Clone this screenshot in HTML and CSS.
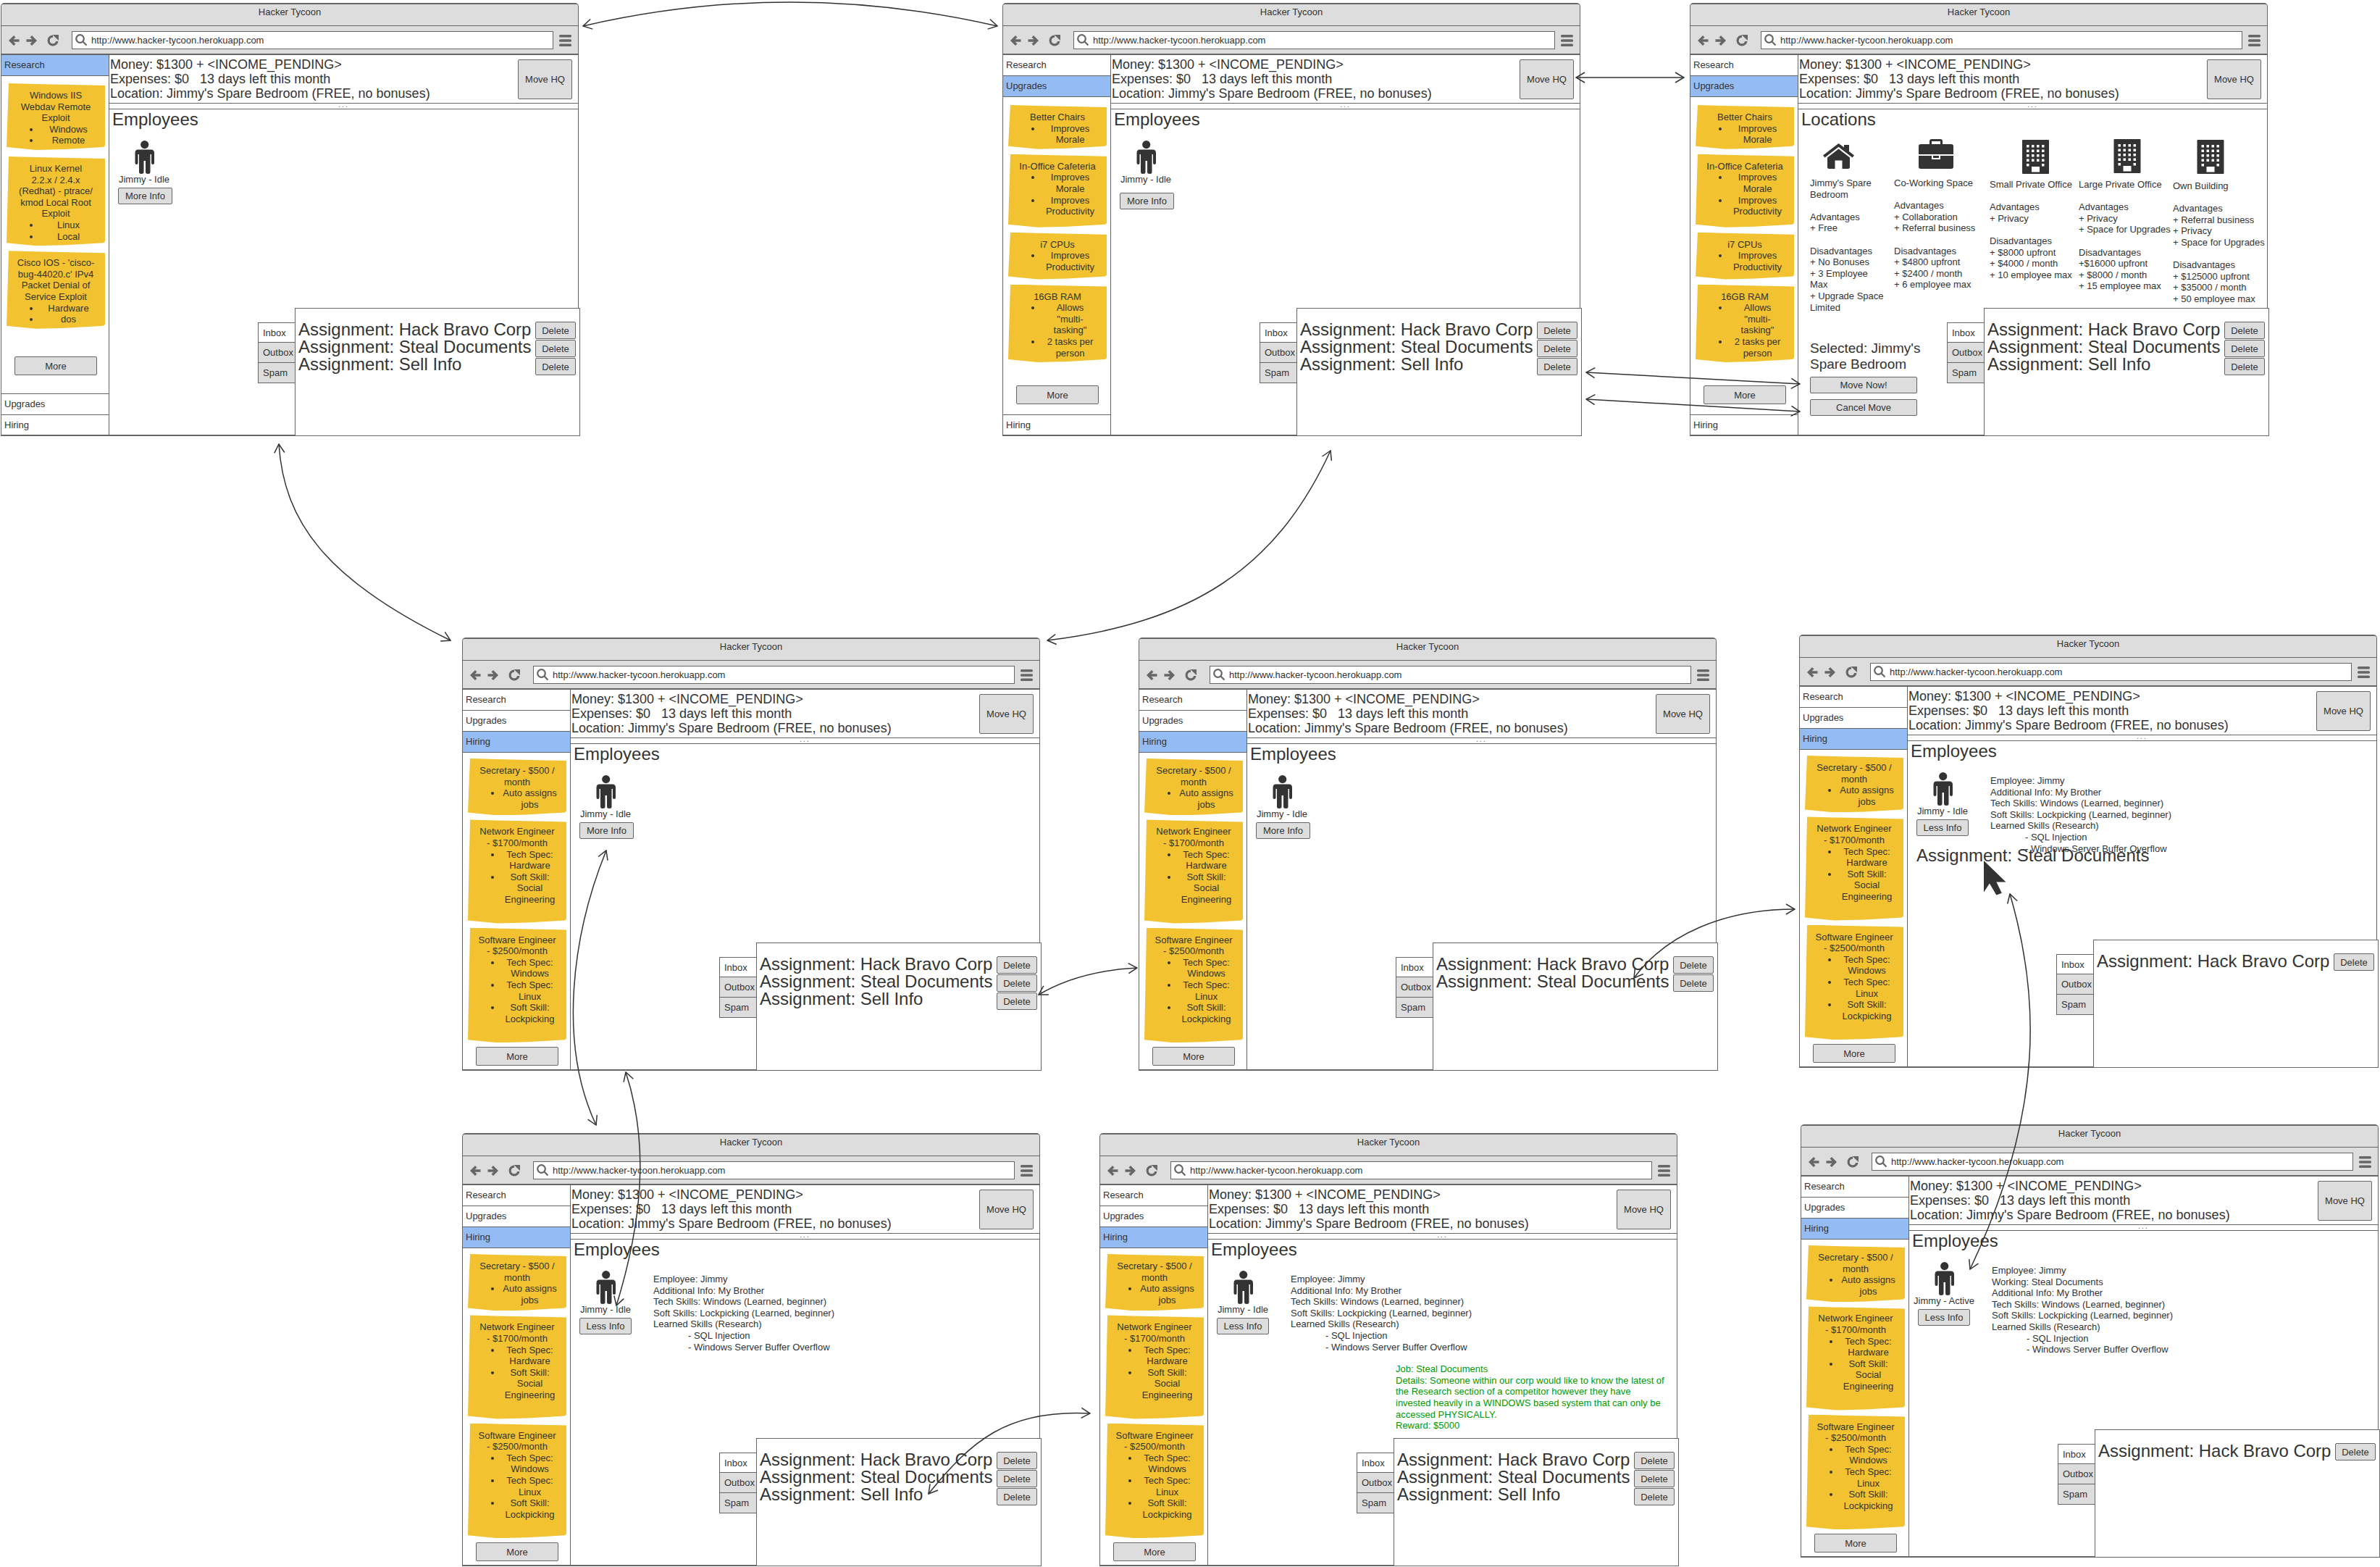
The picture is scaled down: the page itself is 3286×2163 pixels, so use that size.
FILE: index.html
```html
<!DOCTYPE html>
<html lang="en">
<head>
    <meta charset="UTF-8">
    <title>Hacker Tycoon</title>
    <link rel="stylesheet" href="styles.css">
</head>
<body>
<svg class="defs" width="0" height="0">
    <symbol id="back" viewBox="0 0 16 16"><path d="M8 1 L1 8 L8 15 L10.5 12.5 L7.5 9.8 H15.5 V6.2 H7.5 L10.5 3.5 Z"/></symbol>
    <symbol id="forward" viewBox="0 0 16 16"><path d="M8 1 L15 8 L8 15 L5.5 12.5 L8.5 9.8 H0.5 V6.2 H8.5 L5.5 3.5 Z"/></symbol>
    <symbol id="reload" viewBox="0 0 16 16"><path d="M8 0.5 A7.5 7.5 0 1 0 15.5 9 H12 A4.2 4.2 0 1 1 8 3.8 Z"/><path d="M7.5 0 L16 0 L16 8 Z"/></symbol>
    <symbol id="search" viewBox="0 0 17 17"><path class="lens" d="M10.8 10.8 L15.5 15.5 M11.8 6.5 A5.3 5.3 0 1 1 1.2 6.5 A5.3 5.3 0 1 1 11.8 6.5"/></symbol>
    <symbol id="menu" viewBox="0 0 17 16"><rect y="0" width="17" height="3.6" rx="1.5"/><rect y="6.2" width="17" height="3.6" rx="1.5"/><rect y="12.4" width="17" height="3.6" rx="1.5"/></symbol>
    <symbol id="person" viewBox="0 0 27 46"><circle cx="13.7" cy="5.6" r="5.6"/><path d="M4.5 12.5 H22.5 Q27 12.5 27 17 V31 Q27 33 25 33 Q23 33 23 31 V19 H21.5 V43.5 Q21.5 46 18.5 46 Q15 46 15 43.5 V28 H12.5 V43.5 Q12.5 46 9 46 Q6 46 6 43.5 V19 H4.5 V31 Q4.5 33 2.5 33 Q0.5 33 0.5 31 V17 Q0.5 12.5 4.5 12.5 Z"/></symbol>
    <symbol id="house" viewBox="0 0 43 35"><path d="M0 16.5 L21.5 0 L29 5.5 V2 H36 V11 L43 16.5 L40.5 19.5 L21.5 4.8 L2.5 19.5 Z"/><path d="M6 19.5 L21.5 7.5 L37 19.5 V32.5 Q37 35 34.5 35 H26.5 V23.5 H16.5 V35 H8.5 Q6 35 6 32.5 Z"/></symbol>
    <symbol id="briefcase" viewBox="0 0 48 41"><path d="M15 7 V3 Q15 0 18 0 H30 Q33 0 33 3 V7 H30 V3 H18 V7 Z"/><path d="M3 7 H45 Q48 7 48 10 V21 H0 V10 Q0 7 3 7 Z"/><path d="M0 23 H18 V28 H30 V23 H48 V38 Q48 41 45 41 H3 Q0 41 0 38 Z"/><path d="M20 23 H28 V26 H20 Z"/></symbol>
    <symbol id="building" viewBox="0 0 37 47"><path fill-rule="evenodd" d="M1 0 H36 Q37 0 37 1 V46 Q37 47 36 47 H1 Q0 47 0 46 V1 Q0 0 1 0 Z M6 7 v3.5 h3.5 v-3.5 Z M13 7 v3.5 h3.5 v-3.5 Z M20 7 v3.5 h3.5 v-3.5 Z M27 7 v3.5 h3.5 v-3.5 Z M6 13.5 v3.5 h3.5 v-3.5 Z M13 13.5 v3.5 h3.5 v-3.5 Z M20 13.5 v3.5 h3.5 v-3.5 Z M27 13.5 v3.5 h3.5 v-3.5 Z M6 20 v3.5 h3.5 v-3.5 Z M13 20 v3.5 h3.5 v-3.5 Z M20 20 v3.5 h3.5 v-3.5 Z M27 20 v3.5 h3.5 v-3.5 Z M6 26.5 v3.5 h3.5 v-3.5 Z M13 26.5 v3.5 h3.5 v-3.5 Z M20 26.5 v3.5 h3.5 v-3.5 Z M27 26.5 v3.5 h3.5 v-3.5 Z M6 33 v3.5 h3.5 v-3.5 Z M27 33 v3.5 h3.5 v-3.5 Z M13 37 v7.5 h11 v-7.5 Z"/></symbol>
    <symbol id="cursor" viewBox="0 0 31 48"><path d="M0 0 L30.5 29.6 H17.4 L24.8 44.7 L17.4 47.6 L7.9 31.6 L0 43.5 Z"/></symbol>
</svg>

<div class="canvas">

    <!-- research tab -->
    <div class="window w1 research">
        <div class="title">Hacker Tycoon</div>
        <div class="toolbar">
            <svg class="tool"><use href="#back"/></svg>
            <svg class="tool"><use href="#forward"/></svg>
            <svg class="tool"><use href="#reload"/></svg>
            <div class="url"><svg class="lens-icon"><use href="#search"/></svg>http://www.hacker-tycoon.herokuapp.com</div>
            <svg class="tool menu"><use href="#menu"/></svg>
        </div>
        <div class="body">
            <div class="side">
                <div class="tab active">Research</div>
                <div class="cards">
                    <div class="card">Windows IIS Webdav Remote Exploit
                        <ul><li>Windows</li><li>Remote</li></ul>
                    </div>
                    <div class="card">Linux Kernel<br>2.2.x / 2.4.x (Redhat) - ptrace/ kmod Local Root Exploit
                        <ul><li>Linux</li><li>Local</li></ul>
                    </div>
                    <div class="card">Cisco IOS - 'cisco-bug-44020.c' IPv4 Packet Denial of Service Exploit
                        <ul><li>Hardware</li><li>dos</li></ul>
                    </div>
                    <button class="btn more">More</button>
                </div>
                <div class="tab">Upgrades</div>
                <div class="tab last">Hiring</div>
            </div>
            <div class="main">
                <div class="stats">
                    <div class="stat-text">Money: $1300 + &lt;INCOME_PENDING&gt;<br>Expenses: $0 &nbsp; 13 days left this month<br>Location: Jimmy's Spare Bedroom (FREE, no bonuses)</div>
                    <button class="btn move-hq">Move HQ</button>
                </div>
                <div class="split">...</div>
                <div class="content">
                    <h2>Employees</h2>
                    <div class="staff">
                        <div class="person">
                            <svg class="person-icon"><use href="#person"/></svg>
                            <div class="person-name">Jimmy - Idle</div>
                            <button class="btn info">More Info</button>
                        </div>
                    </div>
                </div>
                <div class="mail">
                    <div class="mail-tabs">
                        <div class="mail-tab on">Inbox</div>
                        <div class="mail-tab">Outbox</div>
                        <div class="mail-tab">Spam</div>
                    </div>
                    <div class="mail-list">
                        <div class="mail-names">Assignment: Hack Bravo Corp<br>Assignment: Steal Documents<br>Assignment: Sell Info</div>
                        <div class="mail-actions">
                            <button class="btn del">Delete</button>
                            <button class="btn del">Delete</button>
                            <button class="btn del">Delete</button>
                        </div>
                    </div>
                </div>
            </div>
        </div>
    </div>

    <!-- upgrades tab -->
    <div class="window w2 upgrades">
        <div class="title">Hacker Tycoon</div>
        <div class="toolbar">
            <svg class="tool"><use href="#back"/></svg>
            <svg class="tool"><use href="#forward"/></svg>
            <svg class="tool"><use href="#reload"/></svg>
            <div class="url"><svg class="lens-icon"><use href="#search"/></svg>http://www.hacker-tycoon.herokuapp.com</div>
            <svg class="tool menu"><use href="#menu"/></svg>
        </div>
        <div class="body">
            <div class="side">
                <div class="tab">Research</div>
                <div class="tab active">Upgrades</div>
                <div class="cards">
                    <div class="card">Better Chairs
                        <ul><li>Improves Morale</li></ul>
                    </div>
                    <div class="card pad-m">In-Office Cafeteria
                        <ul><li>Improves Morale</li><li>Improves Productivity</li></ul>
                    </div>
                    <div class="card pad-s">i7 CPUs
                        <ul><li>Improves Productivity</li></ul>
                    </div>
                    <div class="card">16GB RAM
                        <ul><li>Allows "multi-tasking"</li><li>2 tasks per person</li></ul>
                    </div>
                    <button class="btn more">More</button>
                </div>
                <div class="tab last">Hiring</div>
            </div>
            <div class="main">
                <div class="stats">
                    <div class="stat-text">Money: $1300 + &lt;INCOME_PENDING&gt;<br>Expenses: $0 &nbsp; 13 days left this month<br>Location: Jimmy's Spare Bedroom (FREE, no bonuses)</div>
                    <button class="btn move-hq">Move HQ</button>
                </div>
                <div class="split">...</div>
                <div class="content">
                    <h2>Employees</h2>
                    <div class="staff">
                        <div class="person">
                            <svg class="person-icon"><use href="#person"/></svg>
                            <div class="person-name">Jimmy - Idle</div>
                            <button class="btn info low">More Info</button>
                        </div>
                    </div>
                </div>
                <div class="mail">
                    <div class="mail-tabs">
                        <div class="mail-tab on">Inbox</div>
                        <div class="mail-tab">Outbox</div>
                        <div class="mail-tab">Spam</div>
                    </div>
                    <div class="mail-list">
                        <div class="mail-names">Assignment: Hack Bravo Corp<br>Assignment: Steal Documents<br>Assignment: Sell Info</div>
                        <div class="mail-actions">
                            <button class="btn del">Delete</button>
                            <button class="btn del">Delete</button>
                            <button class="btn del">Delete</button>
                        </div>
                    </div>
                </div>
            </div>
        </div>
    </div>

    <!-- upgrades tab, move hq open -->
    <div class="window w3 upgrades">
        <div class="title">Hacker Tycoon</div>
        <div class="toolbar">
            <svg class="tool"><use href="#back"/></svg>
            <svg class="tool"><use href="#forward"/></svg>
            <svg class="tool"><use href="#reload"/></svg>
            <div class="url"><svg class="lens-icon"><use href="#search"/></svg>http://www.hacker-tycoon.herokuapp.com</div>
            <svg class="tool menu"><use href="#menu"/></svg>
        </div>
        <div class="body">
            <div class="side">
                <div class="tab">Research</div>
                <div class="tab active">Upgrades</div>
                <div class="cards">
                    <div class="card">Better Chairs
                        <ul><li>Improves Morale</li></ul>
                    </div>
                    <div class="card pad-m">In-Office Cafeteria
                        <ul><li>Improves Morale</li><li>Improves Productivity</li></ul>
                    </div>
                    <div class="card pad-s">i7 CPUs
                        <ul><li>Improves Productivity</li></ul>
                    </div>
                    <div class="card">16GB RAM
                        <ul><li>Allows "multi-tasking"</li><li>2 tasks per person</li></ul>
                    </div>
                    <button class="btn more">More</button>
                </div>
                <div class="tab last">Hiring</div>
            </div>
            <div class="main">
                <div class="stats">
                    <div class="stat-text">Money: $1300 + &lt;INCOME_PENDING&gt;<br>Expenses: $0 &nbsp; 13 days left this month<br>Location: Jimmy's Spare Bedroom (FREE, no bonuses)</div>
                    <button class="btn move-hq">Move HQ</button>
                </div>
                <div class="split">...</div>
                <div class="content">
                    <h2>Locations</h2>
                    <div class="locations">
                        <div class="loc loc-a">
                            <svg class="loc-icon"><use href="#house"/></svg>
                            Jimmy's Spare<br>Bedroom<br><br>Advantages<br>+ Free<br><br>Disadvantages<br>+ No Bonuses<br>+ 3 Employee<br>Max<br>+ Upgrade Space<br>Limited
                        </div>
                        <div class="loc loc-b">
                            <svg class="loc-icon"><use href="#briefcase"/></svg>
                            Co-Working Space<br><br>Advantages<br>+ Collaboration<br>+ Referral business<br><br>Disadvantages<br>+ $4800 upfront<br>+ $2400 / month<br>+ 6 employee max
                        </div>
                        <div class="loc loc-c">
                            <svg class="loc-icon"><use href="#building"/></svg>
                            Small Private Office<br><br>Advantages<br>+ Privacy<br><br>Disadvantages<br>+ $8000 upfront<br>+ $4000 / month<br>+ 10 employee max
                        </div>
                        <div class="loc loc-d">
                            <svg class="loc-icon"><use href="#building"/></svg>
                            Large Private Office<br><br>Advantages<br>+ Privacy<br>+ Space for Upgrades<br><br>Disadvantages<br>+$16000 upfront<br>+ $8000 / month<br>+ 15 employee max
                        </div>
                        <div class="loc loc-e">
                            <svg class="loc-icon"><use href="#building"/></svg>
                            Own Building<br><br>Advantages<br>+ Referral business<br>+ Privacy<br>+ Space for Upgrades<br><br>Disadvantages<br>+ $125000 upfront<br>+ $35000 / month<br>+ 50 employee max
                        </div>
                    </div>
                    <div class="selected">Selected: Jimmy's Spare Bedroom</div>
                    <button class="btn move-now">Move Now!</button>
                    <button class="btn move-now">Cancel Move</button>
                </div>
                <div class="mail">
                    <div class="mail-tabs">
                        <div class="mail-tab on">Inbox</div>
                        <div class="mail-tab">Outbox</div>
                        <div class="mail-tab">Spam</div>
                    </div>
                    <div class="mail-list">
                        <div class="mail-names">Assignment: Hack Bravo Corp<br>Assignment: Steal Documents<br>Assignment: Sell Info</div>
                        <div class="mail-actions">
                            <button class="btn del">Delete</button>
                            <button class="btn del">Delete</button>
                            <button class="btn del">Delete</button>
                        </div>
                    </div>
                </div>
            </div>
        </div>
    </div>

    <!-- hiring tab -->
    <div class="window w4 hiring">
        <div class="title">Hacker Tycoon</div>
        <div class="toolbar">
            <svg class="tool"><use href="#back"/></svg>
            <svg class="tool"><use href="#forward"/></svg>
            <svg class="tool"><use href="#reload"/></svg>
            <div class="url"><svg class="lens-icon"><use href="#search"/></svg>http://www.hacker-tycoon.herokuapp.com</div>
            <svg class="tool menu"><use href="#menu"/></svg>
        </div>
        <div class="body">
            <div class="side">
                <div class="tab">Research</div>
                <div class="tab">Upgrades</div>
                <div class="tab active">Hiring</div>
                <div class="cards">
                    <div class="card">Secretary - $500 / month
                        <ul><li>Auto assigns jobs</li></ul>
                    </div>
                    <div class="card pad-l">Network Engineer - $1700/month
                        <ul><li>Tech Spec: Hardware</li><li>Soft Skill: Social Engineering</li></ul>
                    </div>
                    <div class="card pad-l">Software Engineer - $2500/month
                        <ul><li>Tech Spec: Windows</li><li>Tech Spec: Linux</li><li>Soft Skill: Lockpicking</li></ul>
                    </div>
                    <button class="btn more">More</button>
                </div>
            </div>
            <div class="main">
                <div class="stats">
                    <div class="stat-text">Money: $1300 + &lt;INCOME_PENDING&gt;<br>Expenses: $0 &nbsp; 13 days left this month<br>Location: Jimmy's Spare Bedroom (FREE, no bonuses)</div>
                    <button class="btn move-hq">Move HQ</button>
                </div>
                <div class="split">...</div>
                <div class="content">
                    <h2>Employees</h2>
                    <div class="staff">
                        <div class="person">
                            <svg class="person-icon"><use href="#person"/></svg>
                            <div class="person-name">Jimmy - Idle</div>
                            <button class="btn info">More Info</button>
                        </div>
                    </div>
                </div>
                <div class="mail">
                    <div class="mail-tabs">
                        <div class="mail-tab on">Inbox</div>
                        <div class="mail-tab">Outbox</div>
                        <div class="mail-tab">Spam</div>
                    </div>
                    <div class="mail-list">
                        <div class="mail-names">Assignment: Hack Bravo Corp<br>Assignment: Steal Documents<br>Assignment: Sell Info</div>
                        <div class="mail-actions">
                            <button class="btn del">Delete</button>
                            <button class="btn del">Delete</button>
                            <button class="btn del">Delete</button>
                        </div>
                    </div>
                </div>
            </div>
        </div>
    </div>

    <!-- sell info deleted -->
    <div class="window w5 hiring">
        <div class="title">Hacker Tycoon</div>
        <div class="toolbar">
            <svg class="tool"><use href="#back"/></svg>
            <svg class="tool"><use href="#forward"/></svg>
            <svg class="tool"><use href="#reload"/></svg>
            <div class="url"><svg class="lens-icon"><use href="#search"/></svg>http://www.hacker-tycoon.herokuapp.com</div>
            <svg class="tool menu"><use href="#menu"/></svg>
        </div>
        <div class="body">
            <div class="side">
                <div class="tab">Research</div>
                <div class="tab">Upgrades</div>
                <div class="tab active">Hiring</div>
                <div class="cards">
                    <div class="card">Secretary - $500 / month
                        <ul><li>Auto assigns jobs</li></ul>
                    </div>
                    <div class="card pad-l">Network Engineer - $1700/month
                        <ul><li>Tech Spec: Hardware</li><li>Soft Skill: Social Engineering</li></ul>
                    </div>
                    <div class="card pad-l">Software Engineer - $2500/month
                        <ul><li>Tech Spec: Windows</li><li>Tech Spec: Linux</li><li>Soft Skill: Lockpicking</li></ul>
                    </div>
                    <button class="btn more">More</button>
                </div>
            </div>
            <div class="main">
                <div class="stats">
                    <div class="stat-text">Money: $1300 + &lt;INCOME_PENDING&gt;<br>Expenses: $0 &nbsp; 13 days left this month<br>Location: Jimmy's Spare Bedroom (FREE, no bonuses)</div>
                    <button class="btn move-hq">Move HQ</button>
                </div>
                <div class="split">...</div>
                <div class="content">
                    <h2>Employees</h2>
                    <div class="staff">
                        <div class="person">
                            <svg class="person-icon"><use href="#person"/></svg>
                            <div class="person-name">Jimmy - Idle</div>
                            <button class="btn info">More Info</button>
                        </div>
                    </div>
                </div>
                <div class="mail">
                    <div class="mail-tabs">
                        <div class="mail-tab on">Inbox</div>
                        <div class="mail-tab">Outbox</div>
                        <div class="mail-tab">Spam</div>
                    </div>
                    <div class="mail-list">
                        <div class="mail-names">Assignment: Hack Bravo Corp<br>Assignment: Steal Documents</div>
                        <div class="mail-actions">
                            <button class="btn del">Delete</button>
                            <button class="btn del">Delete</button>
                        </div>
                    </div>
                </div>
            </div>
        </div>
    </div>

    <!-- dragging steal documents onto jimmy -->
    <div class="window w6 hiring">
        <div class="title">Hacker Tycoon</div>
        <div class="toolbar">
            <svg class="tool"><use href="#back"/></svg>
            <svg class="tool"><use href="#forward"/></svg>
            <svg class="tool"><use href="#reload"/></svg>
            <div class="url"><svg class="lens-icon"><use href="#search"/></svg>http://www.hacker-tycoon.herokuapp.com</div>
            <svg class="tool menu"><use href="#menu"/></svg>
        </div>
        <div class="body">
            <div class="side">
                <div class="tab">Research</div>
                <div class="tab">Upgrades</div>
                <div class="tab active">Hiring</div>
                <div class="cards">
                    <div class="card">Secretary - $500 / month
                        <ul><li>Auto assigns jobs</li></ul>
                    </div>
                    <div class="card pad-l">Network Engineer - $1700/month
                        <ul><li>Tech Spec: Hardware</li><li>Soft Skill: Social Engineering</li></ul>
                    </div>
                    <div class="card pad-l">Software Engineer - $2500/month
                        <ul><li>Tech Spec: Windows</li><li>Tech Spec: Linux</li><li>Soft Skill: Lockpicking</li></ul>
                    </div>
                    <button class="btn more">More</button>
                </div>
            </div>
            <div class="main">
                <div class="stats">
                    <div class="stat-text">Money: $1300 + &lt;INCOME_PENDING&gt;<br>Expenses: $0 &nbsp; 13 days left this month<br>Location: Jimmy's Spare Bedroom (FREE, no bonuses)</div>
                    <button class="btn move-hq">Move HQ</button>
                </div>
                <div class="split">...</div>
                <div class="content">
                    <h2>Employees</h2>
                    <div class="staff">
                        <div class="person">
                            <svg class="person-icon"><use href="#person"/></svg>
                            <div class="person-name">Jimmy - Idle</div>
                            <button class="btn info less">Less Info</button>
                        </div>
                        <div class="details">Employee: Jimmy<br>Additional Info: My Brother<br>Tech Skills: Windows (Learned, beginner)<br>Soft Skills: Lockpicking (Learned, beginner)<br>Learned Skills (Research)<div class="sub">- SQL Injection<br>- Windows Server Buffer Overflow</div></div>
                    </div>
                </div>
                <div class="dragged">Assignment: Steal Documents</div>
                <svg class="drag-cursor"><use href="#cursor"/></svg>
                <div class="mail">
                    <div class="mail-tabs">
                        <div class="mail-tab on">Inbox</div>
                        <div class="mail-tab">Outbox</div>
                        <div class="mail-tab">Spam</div>
                    </div>
                    <div class="mail-list">
                        <div class="mail-names">Assignment: Hack Bravo Corp</div>
                        <div class="mail-actions">
                            <button class="btn del">Delete</button>
                        </div>
                    </div>
                </div>
            </div>
        </div>
    </div>

    <!-- less info -->
    <div class="window w7 hiring">
        <div class="title">Hacker Tycoon</div>
        <div class="toolbar">
            <svg class="tool"><use href="#back"/></svg>
            <svg class="tool"><use href="#forward"/></svg>
            <svg class="tool"><use href="#reload"/></svg>
            <div class="url"><svg class="lens-icon"><use href="#search"/></svg>http://www.hacker-tycoon.herokuapp.com</div>
            <svg class="tool menu"><use href="#menu"/></svg>
        </div>
        <div class="body">
            <div class="side">
                <div class="tab">Research</div>
                <div class="tab">Upgrades</div>
                <div class="tab active">Hiring</div>
                <div class="cards">
                    <div class="card">Secretary - $500 / month
                        <ul><li>Auto assigns jobs</li></ul>
                    </div>
                    <div class="card pad-l">Network Engineer - $1700/month
                        <ul><li>Tech Spec: Hardware</li><li>Soft Skill: Social Engineering</li></ul>
                    </div>
                    <div class="card pad-l">Software Engineer - $2500/month
                        <ul><li>Tech Spec: Windows</li><li>Tech Spec: Linux</li><li>Soft Skill: Lockpicking</li></ul>
                    </div>
                    <button class="btn more">More</button>
                </div>
            </div>
            <div class="main">
                <div class="stats">
                    <div class="stat-text">Money: $1300 + &lt;INCOME_PENDING&gt;<br>Expenses: $0 &nbsp; 13 days left this month<br>Location: Jimmy's Spare Bedroom (FREE, no bonuses)</div>
                    <button class="btn move-hq">Move HQ</button>
                </div>
                <div class="split">...</div>
                <div class="content">
                    <h2>Employees</h2>
                    <div class="staff">
                        <div class="person">
                            <svg class="person-icon"><use href="#person"/></svg>
                            <div class="person-name">Jimmy - Idle</div>
                            <button class="btn info less">Less Info</button>
                        </div>
                        <div class="details">Employee: Jimmy<br>Additional Info: My Brother<br>Tech Skills: Windows (Learned, beginner)<br>Soft Skills: Lockpicking (Learned, beginner)<br>Learned Skills (Research)<div class="sub">- SQL Injection<br>- Windows Server Buffer Overflow</div></div>
                    </div>
                </div>
                <div class="mail">
                    <div class="mail-tabs">
                        <div class="mail-tab on">Inbox</div>
                        <div class="mail-tab">Outbox</div>
                        <div class="mail-tab">Spam</div>
                    </div>
                    <div class="mail-list">
                        <div class="mail-names">Assignment: Hack Bravo Corp<br>Assignment: Steal Documents<br>Assignment: Sell Info</div>
                        <div class="mail-actions">
                            <button class="btn del">Delete</button>
                            <button class="btn del">Delete</button>
                            <button class="btn del">Delete</button>
                        </div>
                    </div>
                </div>
            </div>
        </div>
    </div>

    <!-- job details -->
    <div class="window w8 hiring">
        <div class="title">Hacker Tycoon</div>
        <div class="toolbar">
            <svg class="tool"><use href="#back"/></svg>
            <svg class="tool"><use href="#forward"/></svg>
            <svg class="tool"><use href="#reload"/></svg>
            <div class="url"><svg class="lens-icon"><use href="#search"/></svg>http://www.hacker-tycoon.herokuapp.com</div>
            <svg class="tool menu"><use href="#menu"/></svg>
        </div>
        <div class="body">
            <div class="side">
                <div class="tab">Research</div>
                <div class="tab">Upgrades</div>
                <div class="tab active">Hiring</div>
                <div class="cards">
                    <div class="card">Secretary - $500 / month
                        <ul><li>Auto assigns jobs</li></ul>
                    </div>
                    <div class="card pad-l">Network Engineer - $1700/month
                        <ul><li>Tech Spec: Hardware</li><li>Soft Skill: Social Engineering</li></ul>
                    </div>
                    <div class="card pad-l">Software Engineer - $2500/month
                        <ul><li>Tech Spec: Windows</li><li>Tech Spec: Linux</li><li>Soft Skill: Lockpicking</li></ul>
                    </div>
                    <button class="btn more">More</button>
                </div>
            </div>
            <div class="main">
                <div class="stats">
                    <div class="stat-text">Money: $1300 + &lt;INCOME_PENDING&gt;<br>Expenses: $0 &nbsp; 13 days left this month<br>Location: Jimmy's Spare Bedroom (FREE, no bonuses)</div>
                    <button class="btn move-hq">Move HQ</button>
                </div>
                <div class="split">...</div>
                <div class="content">
                    <h2>Employees</h2>
                    <div class="staff">
                        <div class="person">
                            <svg class="person-icon"><use href="#person"/></svg>
                            <div class="person-name">Jimmy - Idle</div>
                            <button class="btn info less">Less Info</button>
                        </div>
                        <div class="details">Employee: Jimmy<br>Additional Info: My Brother<br>Tech Skills: Windows (Learned, beginner)<br>Soft Skills: Lockpicking (Learned, beginner)<br>Learned Skills (Research)<div class="sub">- SQL Injection<br>- Windows Server Buffer Overflow</div></div>
                    </div>
                    <div class="job">Job: Steal Documents<br>Details: Someone within our corp would like to know the latest of the Research section of a competitor however they have invested heavily in a WINDOWS based system that can only be accessed PHYSICALLY.<br>Reward: $5000</div>
                </div>
                <div class="mail">
                    <div class="mail-tabs">
                        <div class="mail-tab on">Inbox</div>
                        <div class="mail-tab">Outbox</div>
                        <div class="mail-tab">Spam</div>
                    </div>
                    <div class="mail-list">
                        <div class="mail-names">Assignment: Hack Bravo Corp<br>Assignment: Steal Documents<br>Assignment: Sell Info</div>
                        <div class="mail-actions">
                            <button class="btn del">Delete</button>
                            <button class="btn del">Delete</button>
                            <button class="btn del">Delete</button>
                        </div>
                    </div>
                </div>
            </div>
        </div>
    </div>

    <!-- jimmy active -->
    <div class="window w9 hiring">
        <div class="title">Hacker Tycoon</div>
        <div class="toolbar">
            <svg class="tool"><use href="#back"/></svg>
            <svg class="tool"><use href="#forward"/></svg>
            <svg class="tool"><use href="#reload"/></svg>
            <div class="url"><svg class="lens-icon"><use href="#search"/></svg>http://www.hacker-tycoon.herokuapp.com</div>
            <svg class="tool menu"><use href="#menu"/></svg>
        </div>
        <div class="body">
            <div class="side">
                <div class="tab">Research</div>
                <div class="tab">Upgrades</div>
                <div class="tab active">Hiring</div>
                <div class="cards">
                    <div class="card">Secretary - $500 / month
                        <ul><li>Auto assigns jobs</li></ul>
                    </div>
                    <div class="card pad-l">Network Engineer - $1700/month
                        <ul><li>Tech Spec: Hardware</li><li>Soft Skill: Social Engineering</li></ul>
                    </div>
                    <div class="card pad-l">Software Engineer - $2500/month
                        <ul><li>Tech Spec: Windows</li><li>Tech Spec: Linux</li><li>Soft Skill: Lockpicking</li></ul>
                    </div>
                    <button class="btn more">More</button>
                </div>
            </div>
            <div class="main">
                <div class="stats">
                    <div class="stat-text">Money: $1300 + &lt;INCOME_PENDING&gt;<br>Expenses: $0 &nbsp; 13 days left this month<br>Location: Jimmy's Spare Bedroom (FREE, no bonuses)</div>
                    <button class="btn move-hq">Move HQ</button>
                </div>
                <div class="split">...</div>
                <div class="content">
                    <h2>Employees</h2>
                    <div class="staff">
                        <div class="person">
                            <svg class="person-icon"><use href="#person"/></svg>
                            <div class="person-name">Jimmy - Active</div>
                            <button class="btn info less">Less Info</button>
                        </div>
                        <div class="details">Employee: Jimmy<br>Working: Steal Documents<br>Additional Info: My Brother<br>Tech Skills: Windows (Learned, beginner)<br>Soft Skills: Lockpicking (Learned, beginner)<br>Learned Skills (Research)<div class="sub">- SQL Injection<br>- Windows Server Buffer Overflow</div></div>
                    </div>
                </div>
                <div class="mail">
                    <div class="mail-tabs">
                        <div class="mail-tab on">Inbox</div>
                        <div class="mail-tab">Outbox</div>
                        <div class="mail-tab">Spam</div>
                    </div>
                    <div class="mail-list">
                        <div class="mail-names">Assignment: Hack Bravo Corp</div>
                        <div class="mail-actions">
                            <button class="btn del">Delete</button>
                        </div>
                    </div>
                </div>
            </div>
        </div>
    </div>

    <!-- flow arrows between the screens -->
    <svg class="arrows" width="3286" height="2163">
        <defs>
            <marker id="head" viewBox="0 0 16 16" refX="15" refY="8" markerWidth="16" markerHeight="16" markerUnits="userSpaceOnUse" orient="auto-start-reverse">
                <path d="M3 1 L15 8 L3 15" fill="none" stroke="#333" stroke-width="1.5"/>
            </marker>
        </defs>
        <g fill="none" stroke="#333" stroke-width="1.5" marker-start="url(#head)" marker-end="url(#head)">
            <path d="M805 36 Q1090 -30 1377 36"/>
            <path d="M2176 107 H2325"/>
            <path d="M2190 514 L2485 530"/>
            <path d="M2190 551 L2485 568"/>
            <path d="M385 613 C392 720 450 800 622 884"/>
            <path d="M1446 884 C1640 860 1760 790 1837 622"/>
            <path d="M1434 1373 Q1490 1340 1570 1336"/>
            <path d="M2256 1350 C2300 1290 2380 1255 2478 1255"/>
            <path d="M837 1174 C790 1290 770 1440 823 1553"/>
            <path d="M864 1480 C890 1560 895 1660 851 1802"/>
            <path d="M1282 2062 C1340 1990 1390 1945 1505 1951"/>
            <path d="M2775 1234 C2815 1370 2825 1530 2720 1752"/>
        </g>
    </svg>

</div>
</body>
</html>
```

FILE: styles.css
```css
*{
    box-sizing: border-box;
}
html,body {
    margin: 0;
    padding: 0;
    background-color: #ffffff;
}
.defs{
    position: absolute;
}
.canvas{
    position: relative;
    width: 3286px;
    height: 2163px;
    overflow: hidden;
    font-family: "Liberation Sans", Arial, sans-serif;
    font-size: 13px;
    line-height: 15.6px;
    color: #333333;
}
.arrows{
    position: absolute;
    left: 0;
    top: 0;
    z-index: 5;
    pointer-events: none;
}

/* windows sit on a free canvas */
.window{
    position: absolute;
    width: 798px;
    height: 598px;
    display: flex;
    flex-direction: column;
    background-color: #ffffff;
    border: 1px solid #666666;
    border-top-width: 2px;
    border-bottom-width: 2px;
    border-radius: 5px 5px 0 0;
}
.w1{ left: 1px; top: 4px; }
.w2{ left: 1384px; top: 4px; }
.w3{ left: 2333px; top: 4px; }
.w4{ left: 638px; top: 880px; }
.w5{ left: 1572px; top: 880px; }
.w6{ left: 2484px; top: 876px; }
.w7{ left: 638px; top: 1564px; }
.w8{ left: 1518px; top: 1564px; }
.w9{ left: 2486px; top: 1552px; }

.title{
    height: 30px;
    padding-top: 3px;
    text-align: center;
    background-color: #dddddd;
    border-bottom: 1px solid #666666;
    border-radius: 3px 3px 0 0;
}
.toolbar{
    height: 40px;
    flex-shrink: 0;
    display: flex;
    align-items: center;
    padding: 1px 0 0 9px;
    background-color: #dddddd;
    border-bottom: 2px solid #666666;
}
.tool{
    width: 16px;
    height: 16px;
    margin-right: 9px;
    fill: #666666;
}
.tool + .tool{
    margin-right: 13px;
}
.menu{
    width: 17px;
    margin: 0 0 0 8px;
}
.url{
    width: 665px;
    height: 25px;
    margin-left: 5px;
    padding-left: 4px;
    display: flex;
    align-items: center;
    gap: 5px;
    background-color: #ffffff;
    border: 1px solid #666666;
}
.lens-icon{
    width: 17px;
    height: 17px;
}
.lens{
    fill: none;
    stroke: #666666;
    stroke-width: 2.2;
}

.body{
    flex: 1;
    display: flex;
    min-height: 0;
}
.side{
    width: 149px;
    flex-shrink: 0;
    display: flex;
    flex-direction: column;
    border-right: 1px solid #666666;
}
.tab{
    height: 29px;
    flex-shrink: 0;
    padding: 6px 0 0 4px;
    border-bottom: 1px solid #666666;
}
.tab.last{
    border-bottom: none;
    height: 27px;
}
.tab.active{
    background-color: #94bcf3;
}
.cards{
    flex: 1;
    display: flex;
    flex-direction: column;
    gap: 7px;
    padding: 8px 5px 0 7px;
    border-bottom: 1px solid #666666;
}
.research .cards{
    padding-top: 10px;
}
.research .card:first-child{
    margin-bottom: 2px;
}
.upgrades .cards{
    padding-top: 11px;
}
.hiring .cards{
    border-bottom: none;
    gap: 6px;
}
.hiring .card:first-child{
    padding-bottom: 7px;
}
.card{
    width: 136px;
    padding: 9px 13px 5px;
    text-align: center;
    background-color: #f2c230;
    clip-path: polygon(3px 0, 40px 1px, 100% 3px, 100% calc(100% - 6px), calc(100% - 2px) calc(100% - 4px), 60% calc(100% - 1px), 30% 100%, 0 calc(100% - 4px));
}
.card ul{
    margin: 0 -1px 0 0;
    padding: 0 0 0 34px;
}
.pad-s{ padding-bottom: 9px; }
.pad-m{ padding-bottom: 14px; }
.pad-l{ padding-bottom: 25px; }

.btn{
    display: block;
    padding: 0;
    font-family: inherit;
    font-size: 13px;
    color: #333333;
    background-color: #dddddd;
    border: 1px solid #666666;
    border-radius: 2px;
}
.more{
    width: 114px;
    height: 26px;
    flex-shrink: 0;
    align-self: center;
    margin-top: auto;
    margin-bottom: 25px;
}
.upgrades .more{ margin-bottom: 14px; }
.hiring .more{ margin-bottom: 5px; }

.main{
    flex: 1;
    position: relative;
    display: flex;
    flex-direction: column;
    min-width: 0;
}
.stats{
    height: 67px;
    flex-shrink: 0;
    display: flex;
    align-items: center;
    justify-content: space-between;
    padding: 0 8px 0 1px;
    border-bottom: 1px solid #666666;
}
.stat-text{
    font-size: 18px;
    line-height: 20px;
}
.move-hq{
    width: 75px;
    height: 55px;
}
.split{
    height: 8px;
    flex-shrink: 0;
    text-align: center;
    font-size: 10px;
    line-height: 4px;
    letter-spacing: 2px;
    color: #666666;
    border-bottom: 1px solid #666666;
}
.content{
    flex: 1;
    padding-left: 4px;
}
.content h2{
    margin: 0;
    font-size: 24px;
    line-height: 28px;
    font-weight: normal;
}

.staff{
    display: flex;
    align-items: flex-start;
    padding-top: 15px;
    margin-left: 8px;
}
.person{
    width: 72px;
    flex-shrink: 0;
}
.person-icon{
    display: block;
    width: 27px;
    height: 46px;
    margin: 0 auto;
    fill: #333333;
}
.person-name{
    display: flex;
    justify-content: center;
    white-space: nowrap;
}
.info{
    width: 75px;
    height: 23px;
    margin-top: 3px;
}
.info.low{
    margin-top: 10px;
}
.info.less{
    width: 72px;
}
.details{
    margin: 4px 0 0 30px;
}
.sub{
    margin-left: 48px;
}
.job{
    width: 374px;
    margin: 15px 0 0 255px;
    color: #009900;
}
.dragged{
    position: absolute;
    left: 12px;
    top: 221px;
    font-size: 24px;
    line-height: 24px;
}
.drag-cursor{
    position: absolute;
    left: 105px;
    top: 240px;
    width: 31px;
    height: 48px;
    fill: #333333;
}

/* move hq screen */
.locations{
    display: flex;
    margin-left: 12px;
    white-space: nowrap;
}
.loc-icon{
    display: block;
    fill: #333333;
}
.loc-a{ width: 116px; padding-top: 19px; }
.loc-a .loc-icon{ width: 43px; height: 35px; margin: 0 0 12px 18px; }
.loc-b{ width: 132px; padding-top: 13px; }
.loc-b .loc-icon{ width: 48px; height: 41px; margin: 0 0 12px 34px; }
.loc-c{ width: 123px; padding-top: 14px; }
.loc-c .loc-icon{ width: 37px; height: 47px; margin: 0 0 7px 45px; }
.loc-d{ width: 130px; padding-top: 13px; }
.loc-d .loc-icon{ width: 38px; height: 47px; margin: 0 0 8px 48px; }
.loc-e{ padding-top: 14px; }
.loc-e .loc-icon{ width: 38px; height: 47px; margin: 0 0 9px 33px; }
.selected{
    width: 160px;
    margin: 38px 0 0 12px;
    font-size: 19px;
    line-height: 22px;
}
.move-now{
    width: 148px;
    height: 23px;
    margin: 6px 0 0 12px;
}
.move-now + .move-now{
    margin-top: 8px;
}

/* mail overlaps the window corner */
.mail{
    position: absolute;
    right: -3px;
    bottom: -2px;
    width: 445px;
    height: 177px;
    display: flex;
}
.mail-tabs{
    width: 51px;
    flex-shrink: 0;
    padding-top: 20px;
}
.mail-tab{
    height: 28px;
    padding: 6px 0 0 6px;
    background-color: #dddddd;
    border: 1px solid #666666;
    border-top: none;
    border-right: none;
}
.mail-tab.on{
    background-color: #ffffff;
    border-top: 1px solid #666666;
}
.mail-list{
    flex: 1;
    display: flex;
    justify-content: space-between;
    padding: 18px 5px 0 4px;
    background-color: #ffffff;
    border: 1px solid #666666;
}
.mail-names{
    margin-top: -1px;
    font-size: 24px;
    line-height: 24px;
}
.mail-actions{
    display: flex;
    flex-direction: column;
    gap: 1px;
}
.del{
    width: 56px;
    height: 24px;
}
```
